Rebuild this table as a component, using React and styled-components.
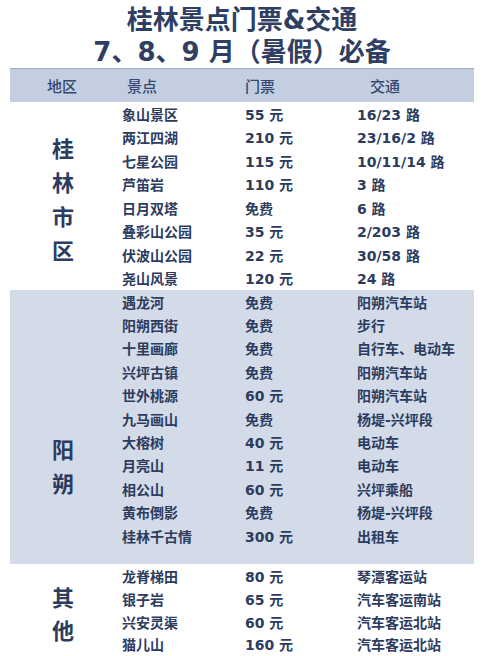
import React from "react";
import styled, { createGlobalStyle } from "styled-components";

const Global = createGlobalStyle`
  html, body { margin: 0; padding: 0; background: #ffffff; }
  body { font-family: "DejaVu Sans", "Noto Sans CJK SC", sans-serif; }
`;

const Page = styled.div`
  width: 464px;
  padding-left: 10px;
  color: #2c3c5f;
`;

const Title = styled.h1`
  margin: 0;
  padding-top: 4px;
  font-size: 26px;
  line-height: 32px;
  font-weight: 700;
  text-align: center;
  color: #2f3f63;
  font-family: "DejaVu Sans", "Noto Sans CJK SC", sans-serif;
`;

const TitleLine = styled.div`
  white-space: nowrap;
`;

const HeaderBar = styled.div`
  display: grid;
  grid-template-columns: 112px 123px 112px 1fr;
  align-items: center;
  height: 33px;
  background: #c4cee1;
  border-top: 1px solid #9eabc4;
  font-size: 15px;
  font-weight: 500;
  color: #33476f;
  font-family: "Noto Sans CJK SC", sans-serif;
`;

const HeadCell = styled.div`
  padding-left: ${(p) => p.$indent || 0}px;
  padding-right: ${(p) => p.$right || 0}px;
  text-align: ${(p) => (p.$center ? "center" : "left")};
`;

const Section = styled.div`
  display: flex;
  background: ${(p) => p.$bg || "transparent"};
  padding-bottom: ${(p) => p.$padBottom || 0}px;
`;

const RegionCell = styled.div`
  width: 106px;
  margin-right: 6px;
  flex: none;
  display: flex;
  align-items: center;
  justify-content: center;
  padding-top: ${(p) => p.$shift || 0}px;
  box-sizing: border-box;
`;

const RegionLabel = styled.div`
  width: 1em;
  font-size: 22px;
  line-height: ${(p) => p.$lh || 34}px;
  font-weight: 700;
  color: #2c3c5f;
  word-break: break-all;
  font-family: "Noto Sans CJK SC", sans-serif;
`;

const Rows = styled.div`
  flex: 1;
  display: flex;
  flex-direction: column;
`;

const Row = styled.div`
  display: grid;
  grid-template-columns: 123px 112px 1fr;
  align-items: center;
  height: ${(p) => p.$h}px;
  font-size: 14px;
  font-weight: 700;
  white-space: nowrap;
`;

const Cell = styled.div``;

const sections = [
  {
    label: "桂林市区",
    rowH: 23.5,
    shift: 4,
    rows: [
      ["象山景区", "55 元", "16/23 路"],
      ["两江四湖", "210 元", "23/16/2 路"],
      ["七星公园", "115 元", "10/11/14 路"],
      ["芦笛岩", "110 元", "3 路"],
      ["日月双塔", "免费", "6 路"],
      ["叠彩山公园", "35 元", "2/203 路"],
      ["伏波山公园", "22 元", "30/58 路"],
      ["尧山风景", "120 元", "24 路"],
    ],
  },
  {
    label: "阳朔",
    rowH: 23.4,
    shift: 92,
    bg: "#d3dbe9",
    padBottom: 17,
    rows: [
      ["遇龙河", "免费", "阳朔汽车站"],
      ["阳朔西街", "免费", "步行"],
      ["十里画廊", "免费", "自行车、电动车"],
      ["兴坪古镇", "免费", "阳朔汽车站"],
      ["世外桃源", "60 元", "阳朔汽车站"],
      ["九马画山", "免费", "杨堤-兴坪段"],
      ["大榕树", "40 元", "电动车"],
      ["月亮山", "11 元", "电动车"],
      ["相公山", "60 元", "兴坪乘船"],
      ["黄布倒影", "免费", "杨堤-兴坪段"],
      ["桂林千古情", "300 元", "出租车"],
    ],
  },
  {
    label: "其他",
    rowH: 22.9,
    shift: 6,
    lh: 33,
    rows: [
      ["龙脊梯田", "80 元", "琴潭客运站"],
      ["银子岩", "65 元", "汽车客运南站"],
      ["兴安灵渠", "60 元", "汽车客运北站"],
      ["猫儿山", "160 元", "汽车客运北站"],
    ],
  },
];

export default function App() {
  return (
    <>
      <Global />
      <Page>
        <Title>
          <TitleLine>桂林景点门票&amp;交通</TitleLine>
          <TitleLine>7、8、9 月（暑假）必备</TitleLine>
        </Title>
        <HeaderBar>
          <HeadCell $center $right={8}>地区</HeadCell>
          <HeadCell $indent={5}>景点</HeadCell>
          <HeadCell $indent={0}>门票</HeadCell>
          <HeadCell $indent={13}>交通</HeadCell>
        </HeaderBar>
        {sections.map((s) => (
          <Section key={s.label} $bg={s.bg} $padBottom={s.padBottom}>
            <RegionCell $shift={s.shift}>
              <RegionLabel $lh={s.lh}>{s.label}</RegionLabel>
            </RegionCell>
            <Rows>
              {s.rows.map((r) => (
                <Row key={r[0]} $h={s.rowH}>
                  <Cell>{r[0]}</Cell>
                  <Cell>{r[1]}</Cell>
                  <Cell>{r[2]}</Cell>
                </Row>
              ))}
            </Rows>
          </Section>
        ))}
      </Page>
    </>
  );
}
